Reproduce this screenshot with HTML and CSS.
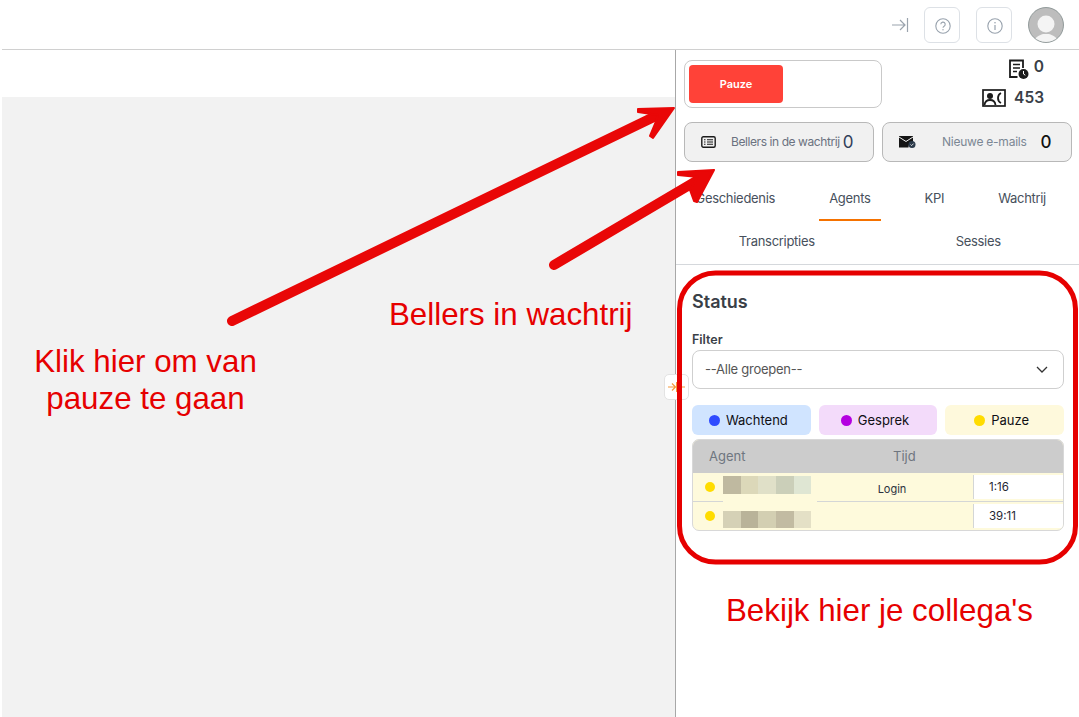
FILE: index.html
```html
<!DOCTYPE html>
<html lang="nl">
<head>
<meta charset="utf-8">
<title>Status</title>
<link rel="stylesheet" href="styles.css">
</head>
<body>
<header class="topbar">
  <svg class="collapse" width="18" height="14" viewBox="0 0 18 14"><path d="M1 7h13M9 2l5 5-5 5M16.500 0v14" fill="none" stroke="#9aa3ad" stroke-width="1.200"/></svg>
  <button class="tool"><svg width="16" height="16" viewBox="0 0 16 16"><circle cx="8" cy="8" r="7.200" fill="none" stroke="#98a2ad" stroke-width="1.100"/><path d="M5.800 6.300a2.200 2.200 0 1 1 3.300 1.900c-.7.400-1.100.8-1.100 1.600" fill="none" stroke="#98a2ad" stroke-width="1.100"/><circle cx="8" cy="11.800" r=".7" fill="#98a2ad"/></svg></button>
  <button class="tool"><svg width="16" height="16" viewBox="0 0 16 16"><circle cx="8" cy="8" r="7.200" fill="none" stroke="#98a2ad" stroke-width="1.100"/><path d="M8 7v5" stroke="#98a2ad" stroke-width="1.200"/><circle cx="8" cy="4.700" r=".8" fill="#98a2ad"/></svg></button>
  <svg class="avatar" width="36" height="36" viewBox="0 0 36 36"><defs><clipPath id="av"><circle cx="18" cy="18" r="17.500"/></clipPath></defs><circle cx="18" cy="18" r="17.500" fill="#bdbdbd"/><g clip-path="url(#av)"><circle cx="18" cy="17" r="8.500" fill="#f4f4f4"/><path d="M5 36c1-5 6-8 10-9h6c4 1 9 4 10 9z" fill="#f4f4f4"/></g><circle cx="18" cy="18" r="17.500" fill="none" stroke="#7f8a8a" stroke-width=".8"/></svg>
</header>
<div class="shell">
  <main class="canvas">
    <div class="canvas-gap"></div>
    <div class="canvas-fill"></div>
  </main>
  <aside class="side">
    <button class="handle"><svg width="18" height="10" viewBox="0 0 18 10"><path d="M0 5h7M4 1.500L7.500 5 4 8.500M13 5h4" fill="none" stroke="#f59a3c" stroke-width="1.200"/><path d="M9 0v10" stroke="#f59a3c" stroke-width="2"/></svg></button>
    <section class="top">
      <div class="pause-row">
        <div class="pause-card"><button class="pause-btn">Pauze</button></div>
        <div class="counts">
          <div class="count count-a"><svg width="21" height="20" viewBox="0 0 21 20"><path d="M15 9V1.500H2V18h7.500" fill="none" stroke="#1b1b1b" stroke-width="1.800"/><path d="M5 5.500h7M5 9h7M5 12.500h4" stroke="#1b1b1b" stroke-width="1.500"/><circle cx="15.500" cy="15" r="5" fill="#1b1b1b"/><path d="M15.500 12v3l1.800 1.200" stroke="#fff" stroke-width="1" fill="none"/></svg><b>0</b></div>
          <div class="count count-b"><svg width="24" height="18" viewBox="0 0 24 18"><rect x="1" y="1" width="22" height="16" fill="none" stroke="#1b1b1b" stroke-width="1.700"/><circle cx="8" cy="7" r="3" fill="#1b1b1b"/><path d="M2.500 16c.5-4 3-5 5.500-5s5 1 5.500 5" fill="none" stroke="#1b1b1b" stroke-width="1.800"/><path d="M19 4c-2 1-3 2.500-3 5s1 4 3 5" fill="none" stroke="#1b1b1b" stroke-width="1.800"/></svg><b>453</b></div>
        </div>
      </div>
      <div class="queue-row">
        <div class="queue">
          <svg class="q-icon" width="15" height="12" viewBox="0 0 15 12"><rect x=".8" y=".8" width="13.400" height="10.400" rx="1.500" fill="none" stroke="#1b1b1b" stroke-width="1.400"/><path d="M3 3.700h1.500M6 3.700h6M3 6h1.500M6 6h6M3 8.300h1.500M6 8.300h6" stroke="#1b1b1b" stroke-width="1.100"/></svg>
          <span class="q-label q-first">Bellers in de wachtrij</span><span class="q-num">0</span>
        </div>
        <div class="queue">
          <svg class="q-icon" width="17" height="12" viewBox="0 0 17 12"><path d="M0 0h14v6.500a5 5 0 0 0-4.500 5H0z" fill="#151515"/><path d="M0 1l7 4.500L14 1" fill="none" stroke="#f0f0f0" stroke-width="1"/><circle cx="13" cy="8.500" r="3.500" fill="#2b3a4a"/><path d="M11.500 8.500l1.100 1.100 2-2" fill="none" stroke="#fff" stroke-width=".8"/></svg>
          <span class="q-label q-second">Nieuwe e-mails</span><span class="q-num q-num-dark">0</span>
        </div>
      </div>
    </section>
    <nav class="tabs">
      <div class="tab-row">
        <a class="tab">Geschiedenis</a>
        <a class="tab active">Agents</a>
        <a class="tab">KPI</a>
        <a class="tab">Wachtrij</a>
      </div>
      <div class="tab-row-wide">
        <a class="tab wide">Transcripties</a>
        <a class="tab wide">Sessies</a>
      </div>
    </nav>
    <section class="status">
      <h2>Status</h2>
      <label class="filter-label">Filter</label>
      <div class="select">
        <span>--Alle groepen--</span>
        <svg width="12" height="7" viewBox="0 0 12 7"><path d="M1 1l5 5 5-5" fill="none" stroke="#333" stroke-width="1.300"/></svg>
      </div>
      <div class="legend">
        <div class="pill blue"><i class="dot d-blue"></i>Wachtend</div>
        <div class="pill purple"><i class="dot d-purple"></i>Gesprek</div>
        <div class="pill yellow"><i class="dot d-yellow"></i>Pauze</div>
      </div>
      <div class="table">
        <div class="thead"><span class="th-agent">Agent</span><span class="th-time">Tijd</span></div>
        <div class="row">
          <i class="dot dot-row"></i>
          <div class="blur"><i class="b1"></i><i class="b2"></i><i class="b3"></i><i class="b4"></i><i class="b5"></i></div>
          <span class="reason">Login</span>
          <span class="time">1:16</span>
        </div>
        <div class="row">
          <i class="line-mask"></i>
          <i class="dot dot-row"></i>
          <div class="blur low"><i class="b6"></i><i class="b7"></i><i class="b8"></i><i class="b9"></i><i class="b10"></i></div>
          <span class="reason"></span>
          <span class="time">39:11</span>
        </div>
      </div>
    </section>
  </aside>
</div>

<div class="note note-pause">Klik hier om van<br>pauze te gaan</div>
<div class="note note-queue">Bellers in wachtrij</div>
<div class="note note-peers">Bekijk hier je collega's</div>
<svg class="marks" width="1079" height="717" viewBox="0 0 1079 717">
  <path d="M232 321L660 114" fill="none" stroke="#e90707" stroke-width="10" stroke-linecap="round"/>
  <path d="M674 108L638 109L638 112L658 115L655 124L650 136L653 138Z" fill="#e90707" stroke="#e90707" stroke-width="2" stroke-linejoin="round"/>
  <path d="M554 265L703 177" fill="none" stroke="#e90707" stroke-width="10" stroke-linecap="round"/>
  <path d="M714 170L678 172L678 175L698 177L690 190L694 201L697 202Z" fill="#e90707" stroke="#e90707" stroke-width="2" stroke-linejoin="round"/>
  <rect x="679.500" y="273" width="396" height="289" rx="36" fill="none" stroke="#e60000" stroke-width="5"/>
</svg>
</body>
</html>
```
FILE: styles.css
```css
* { box-sizing: border-box; }
html, body { margin: 0; height: 100%; }
body {
  width: 1079px;
  height: 717px;
  overflow: hidden;
  background: #fff;
  font-family: Inter, "Liberation Sans", sans-serif;
  color: #3f4650;
  position: relative;
}
button { font-family: inherit; }

.topbar {
  height: 50px;
  margin-left: 2px;
  border-bottom: 1px solid #d0d0d0;
  display: flex;
  align-items: center;
  justify-content: flex-end;
  padding: 0 15px 0 0;
}
.collapse { margin-right: 15px; }
.tool {
  width: 36px;
  height: 36px;
  background: #fff;
  border: 1px solid #dde1e6;
  border-radius: 6px;
  padding: 2px 0 0 2px;
  margin-right: 16px;
  display: flex;
  align-items: center;
  justify-content: center;
}

.shell { display: flex; height: 667px; padding-left: 2px; }
.canvas { width: 673px; display: flex; flex-direction: column; }
.canvas-gap { height: 47px; }
.canvas-fill { flex: 1; background: #f2f2f2; }

.side {
  width: 404px;
  border-left: 1px solid #a8a8a8;
  position: relative;
}
.handle {
  position: absolute;
  left: -12px;
  top: 324px;
  width: 25px;
  height: 26px;
  background: #fff;
  border: 1px solid #e3e3e3;
  border-radius: 5px;
  padding: 0;
  display: flex;
  align-items: center;
  justify-content: center;
}

.top { padding: 10px 7px 0 8px; }
.pause-row { display: flex; height: 48px; }
.pause-card {
  width: 198px;
  height: 48px;
  border: 1px solid #c9c9c9;
  border-radius: 8px;
  padding: 4px;
}
.pause-btn {
  width: 94px;
  height: 38px;
  background: #ff4238;
  border: 0;
  border-radius: 4px;
  color: #fff;
  font-size: 11px;
  font-weight: 600;
}
.counts {
  flex: 1;
  display: flex;
  flex-direction: column;
  align-items: flex-end;
  padding-right: 28px;
  margin-top: -2px;
  gap: 9px;
}
.count {
  display: flex;
  height: 22px;
  align-items: center;
  color: #3a3f47;
  font-size: 15.500px;
  line-height: 18px;
}
.count b { font-weight: 600; }
.count-a b { padding-bottom: 3px; }
.count-a { gap: 5px; }
.count-b { gap: 8px; }

.queue-row { display: flex; gap: 8px; margin-top: 14px; }
.queue {
  width: 190px;
  height: 40px;
  background: #f1f1f1;
  border: 1px solid #b8b8b8;
  border-radius: 8px;
  display: flex;
  align-items: center;
  padding-left: 16px;
  font-size: 12px;
  color: #6b7280;
}
.q-label { letter-spacing: -.42px; padding-bottom: 1px; }
.q-first { margin-left: 15px; }
.q-second { margin-left: 26px; color: #7b8794; letter-spacing: -.24px; }
.q-num { font-size: 17px; color: #30405a; margin-left: 3px; }
.q-num-dark { color: #111; margin-left: 14px; font-weight: 500; }

.tabs {
  margin-top: 16px;
  border-bottom: 1px solid #d5d8dc;
  height: 87px;
  font-size: 13px;
  color: #47505c;
}
.tab-row { display: flex; height: 43px; padding-left: 9px; gap: 33px; }
.tab-row-wide { display: flex; height: 43px; padding-bottom: 3px; }
.tab {
  display: flex;
  align-items: center;
  justify-content: center;
  padding: 0 10.500px 1px;
  letter-spacing: -.3px;
  border-bottom: 2px solid transparent;
}
.tab.wide { flex: 1; padding: 0; border: 0; }
.tab.active { border-bottom-color: #f57200; }

.status { padding: 26px 15px 0 16px; }
.status h2 {
  margin: 0;
  font-size: 18px;
  line-height: 22px;
  font-weight: 600;
  color: #3a3f47;
}
.filter-label {
  display: block;
  margin-top: 19px;
  font-size: 12.500px;
  line-height: 15px;
  font-weight: 600;
  color: #3a3f47;
}
.select {
  margin-top: 3px;
  height: 39px;
  border: 1px solid #cfcfcf;
  border-radius: 8px;
  display: flex;
  align-items: center;
  justify-content: space-between;
  padding: 0 15px 1px 12px;
  font-size: 13px;
  letter-spacing: -.25px;
  color: #555;
}
.legend { display: flex; gap: 8px; margin-top: 16px; }
.pill {
  flex: 1;
  height: 30px;
  border-radius: 6px;
  display: flex;
  align-items: center;
  justify-content: center;
  padding-right: 6px;
  font-size: 13px;
  color: #0f0f14;
  gap: 6px;
}
.blue { background: #d0e4ff; }
.purple { background: #f3dbfa; }
.yellow { background: #fef9dc; }
.dot { width: 11px; height: 11px; border-radius: 50%; display: block; }
.d-blue { background: #2f4bff; }
.d-purple { background: #b400e0; }
.d-yellow { background: #ffdc00; }

.table {
  margin-top: 4px;
  border: 1px solid #d8d8d8;
  border-radius: 7px;
  overflow: hidden;
  background: #fefadc;
  height: 92px;
}
.thead {
  height: 33px;
  background: #cccccc;
  display: flex;
  align-items: center;
  padding-bottom: 1px;
  font-size: 13px;
  color: #6f7680;
}
.th-agent { margin-left: 16px; width: 184px; }
.row {
  height: 28px;
  display: flex;
  position: relative;
  align-items: flex-start;
  font-size: 11px;
  color: #2c3340;
}
.row + .row { border-top: 1px solid #d4d6d6; height: 29px; }
.line-mask {
  position: absolute;
  left: 30px;
  top: -1px;
  width: 94px;
  height: 1px;
  background: #fefadc;
}
.dot-row { background: #ffdc00; width: 10px; height: 10px; margin: 9px 0 0 12px; flex: none; }
.blur { display: flex; width: 88px; height: 18px; margin: 3px 0 0 8px; flex: none; }
.blur.low { margin-top: 9px; height: 17px; }
.blur i { display: block; height: 100%; }
.blur i:nth-child(1) { width: 18px; }
.blur i:nth-child(2) { width: 17px; }
.blur i:nth-child(3) { width: 18px; }
.blur i:nth-child(4) { width: 18px; }
.blur i:nth-child(5) { width: 17px; }
.b1 { background: #bfb9a0; }
.b2 { background: #dcd8b9; }
.b3 { background: #e0e0c8; }
.b4 { background: #cbcfb9; }
.b5 { background: #dfe6d3; }
.b6 { background: #d5d1b6; }
.b7 { background: #b9b399; }
.b8 { background: #d3cfb2; }
.b9 { background: #c2bba2; }
.b10 { background: #e4e0c6; }
.reason { flex: 1; text-align: center; padding-top: 9px; height: 27px; }
.time {
  width: 90px;
  height: 24px;
  margin-top: 2px;
  background: #fff;
  border-left: 1px solid #d4d6d6;
  padding: 5px 0 0 15px;
  font-size: 11.500px;
  color: #1f2633;
  flex: none;
}

.note {
  position: absolute;
  font-family: "Liberation Sans", Arial, sans-serif;
  font-size: 31.300px;
  line-height: 37px;
  color: #e60000;
  white-space: nowrap;
}
.note-pause { left: 30px; top: 343px; width: 231px; text-align: center; }
.note-queue { left: 389px; top: 296px; }
.note-peers { left: 726px; top: 592px; }
.marks { position: absolute; left: 0; top: 0; pointer-events: none; }
```
